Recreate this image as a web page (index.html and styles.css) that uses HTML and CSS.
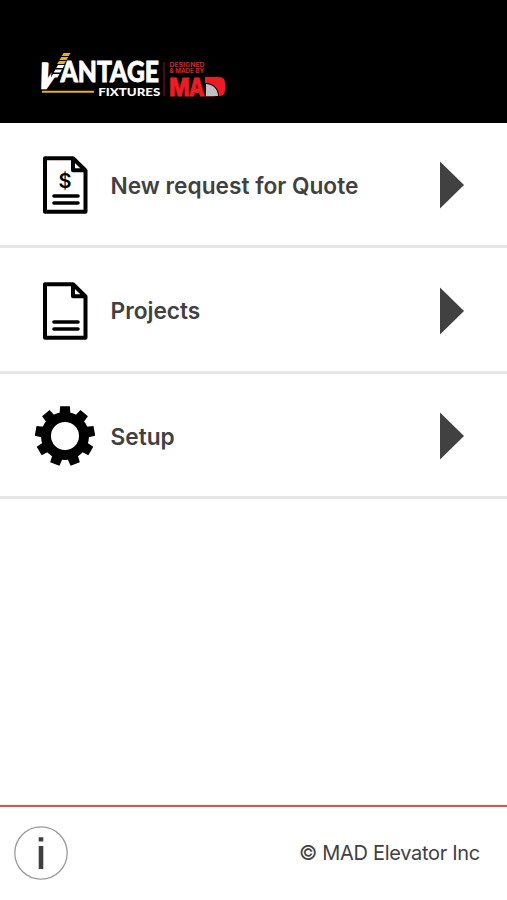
FILE: index.html
```html
<!DOCTYPE html>
<html lang="en">
<head>
<meta charset="utf-8">
<title>Vantage Fixtures</title>
<link rel="stylesheet" href="styles.css">
</head>
<body>
<div class="app">
  <header class="header">
    <svg class="logo" viewBox="20 40 207 60" role="img" aria-label="Vantage Fixtures, designed and made by MAD">
      <text class="logo-word logo-v" transform="translate(34.3 88) skewX(-20)" font-size="34" textLength="20" lengthAdjust="spacingAndGlyphs">V</text>
      <path d="M53 60H72V62L58 77H51Z" fill="#000"/>
      <path d="M53 74H59.5L57.5 77.5H51ZM55.5 69.5H62L60.2 72.6H53.7ZM58 65H64.5L62.7 68.1H56.2Z" fill="#fff"/>
      <path d="M63.5 53H70.5L68.8 56H61.8ZM61.2 57H68.2L66.5 60H59.5ZM58.9 61H65.9L64.2 64H57.2Z" fill="#dfb12d"/>
      <text class="logo-word" x="60.5" y="82.3" font-size="27.6" textLength="98.5" lengthAdjust="spacingAndGlyphs">ANTAGE</text>
      <path d="M42 90.8H94V92.8H42Z" fill="#dfb12d"/>
      <text class="logo-sub" x="98.3" y="96" font-size="11.5" textLength="62" lengthAdjust="spacingAndGlyphs">FIXTURES</text>
      <path d="M164 62V96" stroke="#8b161b" stroke-width="1"/>
      <text class="logo-tag" x="169.5" y="66.5" textLength="35" lengthAdjust="spacingAndGlyphs">DESIGNED</text>
      <text class="logo-tag" x="169.5" y="72.7" textLength="34.5" lengthAdjust="spacingAndGlyphs">&amp; MADE BY</text>
      <text class="logo-mad" y="95.5" font-size="25"><tspan x="169.2" textLength="20.5" lengthAdjust="spacingAndGlyphs">M</tspan><tspan x="189" textLength="15.5" lengthAdjust="spacingAndGlyphs">A</tspan><tspan x="204" textLength="19" lengthAdjust="spacingAndGlyphs">D</tspan></text>
      <path d="M205 77H219Q225 77 225 83V90Q225 96 219 96H205Z" fill="#ed1c24"/>
      <path d="M205 83H206A13 13 0 0 1 219 96H205Z" fill="#000"/>
      <path d="M206 84A12 12 0 0 1 218 96H206Z" fill="#bfc1c2"/>
    </svg>
  </header>
  <nav class="menu">
    <a class="row">
      <svg class="icon" viewBox="0 0 60 60">
        <path class="line" d="M10 3.2H38L50.5 15.5V56.8H10ZM38 3.2V15.2H50.5"/>
        <path class="line round" d="M19 41H43M19 48H43"/>
        <text class="dollar" x="30" y="33" text-anchor="middle">$</text>
      </svg>
      <span class="label">New request for Quote</span>
      <svg class="arrow" viewBox="0 0 24 48"><path d="M0 .5L24 24L0 47.5Z"/></svg>
    </a>
    <a class="row">
      <svg class="icon" viewBox="0 0 60 60">
        <path class="line" d="M10 3.2H38L50.5 15.5V56.8H10ZM38 3.2V15.2H50.5"/>
        <path class="line round" d="M19 41H43M19 48H43"/>
      </svg>
      <span class="label">Projects</span>
      <svg class="arrow" viewBox="0 0 24 48"><path d="M0 .5L24 24L0 47.5Z"/></svg>
    </a>
    <a class="row">
      <svg class="icon" viewBox="-30 -30 60 60">
        <defs><path id="tooth" d="M-5.5 -20L-4.9 -29.8H4.9L5.5 -20Z"/></defs>
        <circle r="19" fill="none" stroke="#000" stroke-width="10"/>
        <use href="#tooth"/>
        <use href="#tooth" transform="rotate(40)"/>
        <use href="#tooth" transform="rotate(80)"/>
        <use href="#tooth" transform="rotate(120)"/>
        <use href="#tooth" transform="rotate(160)"/>
        <use href="#tooth" transform="rotate(200)"/>
        <use href="#tooth" transform="rotate(240)"/>
        <use href="#tooth" transform="rotate(280)"/>
        <use href="#tooth" transform="rotate(320)"/>
      </svg>
      <span class="label">Setup</span>
      <svg class="arrow" viewBox="0 0 24 48"><path d="M0 .5L24 24L0 47.5Z"/></svg>
    </a>
  </nav>
  <footer class="footer">
    <svg class="info" viewBox="0 0 54 54" role="img" aria-label="Information">
      <circle cx="27" cy="27" r="26.2" fill="none" stroke="#999" stroke-width="1.3"/>
      <path d="M24.7 11.2H29.3V15.4H24.7ZM24.7 20H29.3V43H24.7Z" fill="#404041"/>
    </svg>
    <span class="copyright">© MAD Elevator Inc</span>
  </footer>
</div>
</body>
</html>
```
FILE: styles.css
```css
* {
  box-sizing: border-box;
}

body {
  margin: 0;
  background: #fff;
  color: #414142;
  font-family: Inter, "Liberation Sans", sans-serif;
}

.app {
  display: flex;
  flex-direction: column;
  height: 900px;
}

.header {
  flex: none;
  height: 123px;
  padding: 40px 0 0 20px;
  background: #000;
}

.logo {
  display: block;
  width: 207px;
  height: 60px;
  overflow: visible;
}

.logo-word {
  fill: #fff;
  font-family: Lato, sans-serif;
  font-weight: 900;
  stroke: #fff;
  stroke-width: 0.8px;
}

.logo-v {
  stroke-width: 2.4px;
}

.logo-sub {
  fill: #fff;
  font-family: Lato, sans-serif;
  font-weight: 900;
}

.logo-tag {
  fill: #d8232a;
  font-size: 5.6px;
  font-weight: 700;
}

.logo-mad {
  fill: #ed1c24;
  stroke: #ed1c24;
  stroke-width: 0.8px;
  stroke-linejoin: round;
  font-weight: 800;
}

.menu {
  flex: 1;
}

.row {
  display: flex;
  align-items: center;
  height: 125.3px;
  padding: 2.6px 43.5px 0 35px;
  border-bottom: 3px solid #e6e6e6;
}

.icon {
  flex: none;
  width: 60px;
  height: 60px;
}

.line {
  fill: none;
  stroke: #000;
  stroke-width: 4;
  stroke-linejoin: round;
}

.round {
  stroke-linecap: round;
  stroke-width: 3.6;
}

.dollar {
  font-size: 20px;
  font-weight: 600;
}

.label {
  flex: 1;
  margin-left: 15.5px;
  font-size: 22.7px;
  font-weight: 600;
  white-space: nowrap;
}

.arrow {
  flex: none;
  width: 24px;
  height: 48px;
  fill: #414142;
}

.footer {
  display: flex;
  flex: none;
  align-items: center;
  justify-content: space-between;
  height: 95px;
  padding: 0 27px 1px 14px;
  border-top: 2px solid #e2504c;
}

.info {
  width: 54px;
  height: 54px;
}

.copyright {
  font-size: 20px;
  letter-spacing: -0.3px;
}
```
